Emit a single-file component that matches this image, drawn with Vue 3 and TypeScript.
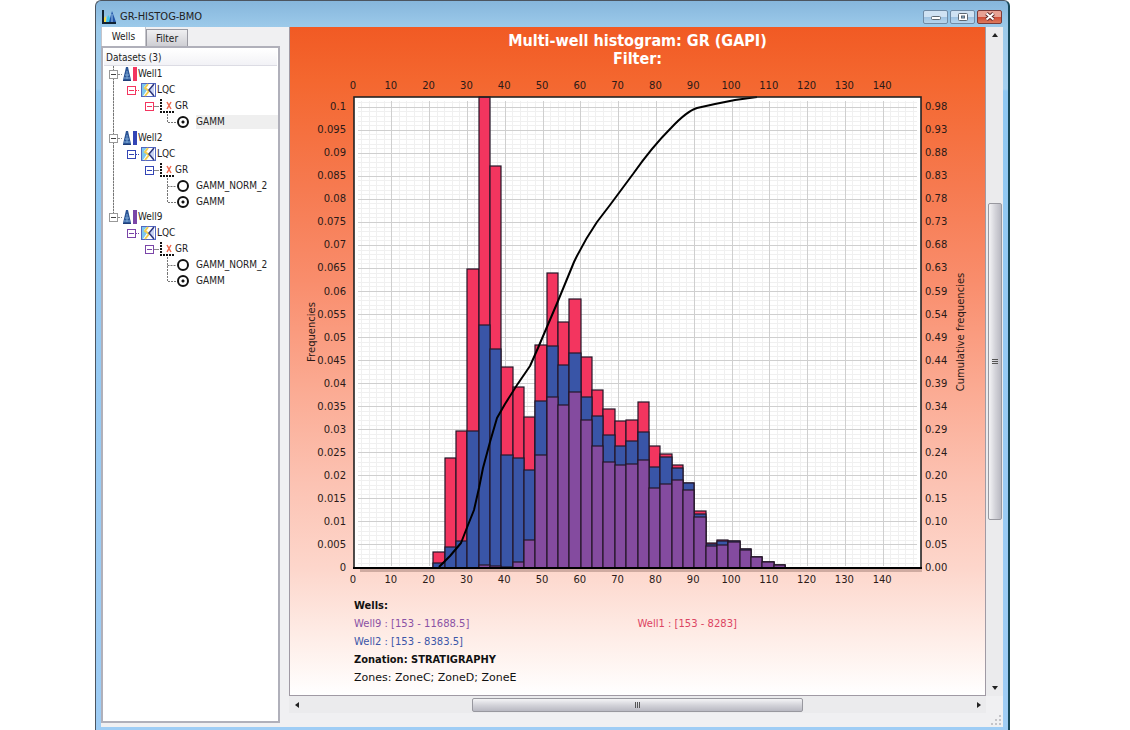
<script setup lang="ts">
import { ref } from 'vue'

type Kind = 'well' | 'set' | 'curve' | 'leaf'
interface TreeRow {
  kind: Kind
  label: string
  color: string
  group: string
  trunk: 'full' | 'half' | 'none'
  more?: boolean
  second?: boolean
  active?: boolean
}

const RED = '#f3355f'
const BLUE = '#3955a7'
const PURPLE = '#844b9f'

const rows: TreeRow[] = []
const wells = [
  { name: 'Well1', color: RED, leaves: ['GAMM'] },
  { name: 'Well2', color: '#3345b5', leaves: ['GAMM_NORM_2', 'GAMM'] },
  { name: 'Well9', color: '#7a45a8', leaves: ['GAMM_NORM_2', 'GAMM'] },
]
wells.forEach((w, i) => {
  const last = i === wells.length - 1
  const base = { color: w.color, group: w.name, trunk: (last ? 'none' : 'full') as TreeRow['trunk'] }
  rows.push({ ...base, kind: 'well', label: w.name, trunk: last ? 'half' : 'full' })
  rows.push({ ...base, kind: 'set', label: 'LQC' })
  rows.push({ ...base, kind: 'curve', label: 'GR' })
  w.leaves.forEach((l, k) =>
    rows.push({
      ...base,
      kind: 'leaf',
      label: l,
      more: k < w.leaves.length - 1,
      second: k > 0,
      active: i === 0,
    }),
  )
})
const selected = ref<Record<string, string>>({ Well1: 'GAMM', Well2: 'GAMM', Well9: 'GAMM' })

const plot = { left: 64, right: 631, top: 29, bottom: 500 }
const unit = (plot.right - plot.left) / 150
const step = 23.04
const xOf = (v: number) => plot.left + v * unit

const xTicks = Array.from({ length: 15 }, (_, i) => i * 10)
const xMinor = Array.from({ length: 74 }, (_, i) => (i + 1) * 2).filter((v) => v % 10 !== 0)
const yMajor = Array.from({ length: 20 }, (_, i) => plot.bottom - (i + 1) * step)
const yMinor = Array.from({ length: 101 }, (_, i) => i + 1)
  .filter((n) => n % 5 !== 0)
  .map((n) => plot.bottom - (n * step) / 5)
const leftLabels = Array.from({ length: 21 }, (_, i) => String(Number((i * 0.005).toFixed(3))))
const rightLabels = [
  '0.00', '0.05', '0.10', '0.15', '0.20', '0.24', '0.29', '0.34', '0.39', '0.44', '0.49',
  '0.54', '0.59', '0.63', '0.68', '0.73', '0.78', '0.83', '0.88', '0.93', '0.98',
]

// stacked heights of each bin: Well1, Well2, Well9
const bins: [number, number, number][] = [
  [16, 5, 0], [110, 21, 0], [137, 27, 0], [299, 137, 0], [471, 243, 3], [402, 219, 2],
  [201, 113, 1], [181, 110, 6], [151, 98, 28], [223, 167, 113], [295, 222, 171],
  [246, 203, 163], [269, 215, 176], [211, 171, 148], [178, 152, 122], [159, 133, 106],
  [147, 122, 103], [148, 127, 104], [166, 136, 108], [122, 101, 80], [114, 111, 84],
  [103, 100, 88], [85, 85, 78], [57, 54, 51], [25, 24, 22], [28, 27, 23], [27, 27, 26],
  [19, 19, 18], [11, 11, 11], [6, 6, 6], [3, 3, 3],
]
const layers = [
  { color: RED, index: 0 },
  { color: BLUE, index: 1 },
  { color: PURPLE, index: 2 },
]
const bars = layers.flatMap((l) =>
  bins
    .map((b, i) => ({
      x: Math.round(xOf(21 + i * 3)),
      w: Math.round(xOf(24 + i * 3)) - Math.round(xOf(21 + i * 3)),
      h: b[l.index],
      color: l.color,
    }))
    .filter((b) => b.h > 0),
)

const curve =
  'M149 499 L160 488 L171 475 L178 457 L184 442 L189 420 L193 400 L200 374 L207 350 L215 336 L227 317 L240 298 L248 280 L268 233 L284 194 Q294 173 307 154 L320 137 L343 106 Q362 79 381 60 Q397 43 407 40 L425 36 L445 32 L467 29'
</script>

<template>
  <main class="window">
    <header class="titlebar">
      <svg class="logo" width="16" height="16" viewBox="0 0 16 16">
        <path d="M2 1V14H15" fill="none" stroke="#123" stroke-width="2" />
        <path d="M3 13V9L5 7V13Z" fill="#f2d64a" />
        <path d="M5 13L7 6L9 9V13Z" fill="#42c3e8" />
        <path d="M8 13L11 2L15 13Z" fill="#2456a8" />
        <path d="M11 5V13" stroke="#9ac8f0" />
      </svg>
      <h1>GR-HISTOG-BMO</h1>
      <div class="controls">
        <button type="button" aria-label="Minimize">
          <svg width="12" height="8" viewBox="0 0 12 8"><rect x="1.5" y="3.5" width="9" height="3" rx="1" fill="#fff" stroke="#5d6873" /></svg>
        </button>
        <button type="button" aria-label="Maximize">
          <svg width="12" height="8" viewBox="0 0 12 8"><rect x="1.5" y=".5" width="9" height="7" rx="1" fill="#fff" stroke="#5d6873" /><rect x="4.5" y="3" width="3" height="2" fill="#8fb4d6" stroke="#5d6873" /></svg>
        </button>
        <button type="button" class="close" aria-label="Close">
          <svg width="12" height="9" viewBox="0 0 12 9"><path d="M2.5 1.5L9.5 7.5M9.5 1.5L2.5 7.5" stroke="#5c2a2a" stroke-width="4" /><path d="M2.5 1.5L9.5 7.5M9.5 1.5L2.5 7.5" stroke="#fff" stroke-width="2" /></svg>
        </button>
      </div>
    </header>

    <div class="body">
      <aside class="side">
        <div class="tabs" role="tablist">
          <button type="button" role="tab" class="tab current" aria-selected="true">Wells</button>
          <button type="button" role="tab" class="tab" aria-selected="false">Filter</button>
        </div>
        <section class="tree">
          <h2>Datasets (3)</h2>
          <div
            v-for="(r, i) in rows"
            :key="i"
            class="row"
            :class="[r.kind, 'trunk-' + r.trunk, { second: r.second }]"
          >
            <button
              v-if="r.kind !== 'leaf'"
              type="button"
              class="expander"
              :aria-label="'Collapse ' + r.label"
              :style="{ borderColor: r.kind === 'well' ? '#999' : r.color, color: r.kind === 'well' ? '#444' : r.color }"
            ></button>

            <svg v-if="r.kind === 'well'" width="20" height="16" viewBox="0 0 20 16">
              <path d="M0 8.5H4" stroke="#888" stroke-dasharray="2 1" />
              <path d="M8 1H10L13 14H5Z" fill="#2c5596" />
              <path d="M9 5V13M7 9H11M6 12H12" stroke="#7fabd8" />
              <path d="M5 14.5H13" stroke="#1e3e78" />
              <rect x="15" y="1" width="4" height="14" :fill="r.color" />
            </svg>
            <svg v-else-if="r.kind === 'set'" width="21" height="16" viewBox="0 0 21 16">
              <path d="M0 8.5H3" :stroke="r.color" stroke-dasharray="1 1" />
              <rect x="5.5" y="1.5" width="14" height="13" fill="#fff" stroke="#5367c0" />
              <path d="M6 2H11L8 5L11 8L7 14H6Z" fill="#7cc8ee" />
              <path d="M12 2L9 6L13 9L9 14" fill="none" stroke="#f2cd50" stroke-width="2" />
              <path d="M18 2L13 8L18 14" fill="#c9d4f4" stroke="#2d357c" stroke-width="1.5" />
            </svg>
            <svg v-else-if="r.kind === 'curve'" width="21" height="16" viewBox="0 0 21 16">
              <path d="M0 8.5H5" stroke="#888" />
              <path d="M7 1V14H21" fill="none" stroke="#111" stroke-width="2" stroke-dasharray="2 1" />
              <path d="M13 4L17 11M17 4L13 11" stroke="#f06a50" stroke-width="1.5" />
            </svg>
            <template v-else>
              <svg class="elbow" width="10" height="16" viewBox="0 0 10 16">
                <path :d="r.more ? 'M.5 0V16M.5 8.5H9' : 'M.5 0V8.5H9'" fill="none" stroke="#777" stroke-dasharray="2 1" />
              </svg>
              <input
                :id="'leaf' + i"
                v-model="selected[r.group]"
                type="radio"
                :name="r.group"
                :value="r.label"
              />
            </template>

            <label v-if="r.kind === 'leaf'" :for="'leaf' + i" :class="{ active: r.active }">{{ r.label }}</label>
            <span v-else>{{ r.label }}</span>
          </div>
        </section>
      </aside>

      <section class="view">
        <div class="chart">
          <h2>Multi-well histogram: GR (GAPI)<br />Filter:</h2>
          <svg class="plot" viewBox="0 0 695 520" role="img" aria-label="Histogram of GR with cumulative curve">
            <path d="M70 502H632" fill="none" stroke="#8a6a62" stroke-opacity=".4" stroke-width="4" />
            <rect :x="plot.left" :y="plot.top" width="567" height="471" fill="#fff" />
            <g stroke="#f0f0f0" shape-rendering="crispEdges">
              <line v-for="v in xMinor" :key="v" :x1="xOf(v)" :x2="xOf(v)" y1="33" y2="498" />
              <line v-for="y in yMinor" :key="y" x1="68" x2="627" :y1="y" :y2="y" />
            </g>
            <g stroke="#cfcfcf" shape-rendering="crispEdges">
              <line v-for="v in xTicks.slice(1)" :key="v" :x1="xOf(v)" :x2="xOf(v)" y1="33" y2="498" />
              <line v-for="y in yMajor" :key="y" x1="68" x2="627" :y1="y" :y2="y" />
            </g>
            <g stroke="#241628" stroke-width="1.2">
              <rect
                v-for="(b, i) in bars"
                :key="i"
                :x="b.x"
                :y="plot.bottom - b.h"
                :width="b.w"
                :height="b.h"
                :fill="b.color"
              />
            </g>
            <path :d="curve" fill="none" stroke="#000" stroke-width="2" stroke-linejoin="round" />
            <rect :x="plot.left" :y="plot.top" width="567" height="471" fill="none" stroke="#222" stroke-width="1.6" />
            <path d="M63 500H632" stroke="#000" stroke-width="2" />
            <g class="tick" text-anchor="middle">
              <text v-for="v in xTicks" :key="v" :x="xOf(v) - 1" y="21">{{ v }}</text>
              <text v-for="v in xTicks" :key="'b' + v" :x="xOf(v) - 1" y="515">{{ v }}</text>
            </g>
            <g class="tick" text-anchor="end">
              <text v-for="(t, i) in leftLabels" :key="t" x="56" :y="plot.bottom - i * step + 3">{{ t }}</text>
            </g>
            <g class="tick">
              <text v-for="(t, i) in rightLabels" :key="t" x="635" :y="plot.bottom - i * step + 3">{{ t }}</text>
            </g>
            <g class="tick" text-anchor="middle">
              <text transform="translate(25 264) rotate(-90)">Frequencies</text>
              <text transform="translate(674 264) rotate(-90)">Cumulative frequencies</text>
            </g>
          </svg>
          <div class="legend">
            <strong class="wide">Wells:</strong>
            <span class="purple">Well9 : [153 - 11688.5]</span>
            <span class="red">Well1 : [153 - 8283]</span>
            <span class="blue wide">Well2 : [153 - 8383.5]</span>
            <strong class="wide">Zonation: STRATIGRAPHY</strong>
            <span class="zones wide">Zones: ZoneC; ZoneD; ZoneE</span>
          </div>
        </div>
        <div class="bar vertical">
          <button type="button" aria-label="Scroll up"><svg width="8" height="8" viewBox="0 0 8 8"><path d="M4 2L7 6H1Z" fill="#222" /></svg></button>
          <div class="thumb"><i></i><i></i><i></i></div>
          <button type="button" aria-label="Scroll down"><svg width="8" height="8" viewBox="0 0 8 8"><path d="M4 6L7 2H1Z" fill="#222" /></svg></button>
        </div>
        <div class="bar horizontal">
          <button type="button" aria-label="Scroll left"><svg width="8" height="8" viewBox="0 0 8 8"><path d="M2 4L6 1V7Z" fill="#222" /></svg></button>
          <div class="thumb"><i></i><i></i><i></i></div>
          <button type="button" aria-label="Scroll right"><svg width="8" height="8" viewBox="0 0 8 8"><path d="M6 4L2 1V7Z" fill="#222" /></svg></button>
        </div>
        <div class="status">
          <svg width="10" height="10" viewBox="0 0 10 10"><path d="M8 0h2v2h-2zM4 4h2v2h-2zM8 4h2v2h-2zM0 8h2v2h-2zM4 8h2v2h-2zM8 8h2v2h-2z" fill="#c4c4c8" /></svg>
        </div>
      </section>
    </div>
  </main>
</template>

<style>
body {
  margin: 0;
  background: #fff;
}
</style>

<style scoped>
* {
  box-sizing: border-box;
}
h1,
h2 {
  margin: 0;
}
button {
  padding: 0;
  margin: 0;
  font: inherit;
  color: inherit;
}
svg {
  display: block;
  flex: none;
}
.window {
  display: flex;
  flex-direction: column;
  min-height: 100vh;
  margin: 0 120px 0 95px;
  padding: 0 5px 3px;
  border: 1px solid #4c5560;
  border-right: 2px solid #17485a;
  border-bottom: 0;
  border-radius: 6px 6px 0 0;
  background: linear-gradient(#86b6dc, #9ccaea 26px, #a4d0f0 88px, #8fc8f2 90px, #9fcdf5);
  font-family: 'DejaVu Sans Condensed', 'DejaVu Sans', sans-serif;
  font-size: 10px;
  color: #222;
}
.titlebar {
  display: flex;
  align-items: center;
  height: 26px;
  padding-top: 5px;
}
.titlebar h1 {
  flex: 1;
  margin-left: 3px;
  font-size: 11px;
  font-weight: 400;
}
.controls {
  display: flex;
  gap: 2px;
  padding-right: 1px;
}
.controls button {
  display: grid;
  place-items: center;
  width: 25px;
  height: 14px;
  border: 1px solid #6f8ba6;
  border-radius: 2px;
  background: linear-gradient(#cfe2f3 50%, #9fc3e2 50%, #b5d5ee);
}
.controls .close {
  border-color: #7a3a38;
  background: linear-gradient(#e8a193 50%, #cf4a35 50%, #dc7a5c);
}
.body {
  display: flex;
  flex: 1;
  background: #f0f0f2;
}
.side {
  display: flex;
  flex-direction: column;
  width: 182px;
  margin-right: 6px;
  padding-bottom: 4px;
}
.tabs {
  display: flex;
  align-items: flex-end;
  height: 19px;
}
.tab {
  width: 42px;
  height: 17px;
  border: 1px solid #9a9aa2;
  border-bottom: 0;
  background: linear-gradient(#efeff1, #cfcfd4);
}
.tab.current {
  width: 45px;
  height: 19px;
  border-color: #c4c4ca;
  border-top: 0;
  background: #fff;
}
.tree {
  flex: 1;
  margin-right: 3px;
  border: 2px solid #b0b0ba;
  background: #fff;
}
.tree h2 {
  height: 17px;
  margin: 1px 1px 0;
  padding-left: 2px;
  border-bottom: 1px solid #dcdce4;
  background: linear-gradient(#fff, #f2f2f6);
  font-size: 10px;
  font-weight: 400;
  line-height: 17px;
}
.row {
  display: flex;
  align-items: center;
  height: 16px;
  line-height: 14px;
  background: repeating-linear-gradient(#777 0 2px, #ccc 2px 3px) 10px 0 / 1px 100% no-repeat;
}
.row.trunk-half {
  background-size: 1px 8px;
}
.row.trunk-none {
  background: none;
}
.row.second {
  height: 15px;
}
.row.well {
  padding-left: 6px;
}
.row.well span {
  margin-left: 6px;
}
.row.set {
  padding-left: 24px;
}
.row.curve {
  padding-left: 42px;
}
.row.leaf {
  padding-left: 64px;
}
.expander {
  display: grid;
  place-items: center;
  flex: none;
  width: 9px;
  height: 9px;
  border: 1px solid;
  background: #fff;
}
.expander::after {
  content: '';
  width: 5px;
  height: 1px;
  background: currentColor;
}
.row.well svg {
  margin-right: -6px;
}
input[type='radio'] {
  appearance: none;
  flex: none;
  width: 12px;
  height: 12px;
  margin: 0;
  border: 2px solid #111;
  border-radius: 50%;
  background: #fff;
}
input[type='radio']:checked {
  background: radial-gradient(circle, #111 0 1px, #fff 2px);
}
.row label {
  flex: 1;
  margin-left: 7px;
}
.row label.active {
  background: #efefef;
}
.view {
  display: grid;
  flex: 1;
  grid-template-columns: minmax(0, 1fr) 17px;
  grid-template-rows: 1fr 17px 14px;
}
.chart {
  border: 1px solid #a09aa4;
  border-top: 0;
  background: linear-gradient(#f15a24, #f4672f 8%, #f67a50 24%, #f98d6c 38%, #fbaa92 54%, #fcc2b2 68%, #fdd6cb 81%, #feece6 91%, #fff);
}
.chart h2 {
  padding-top: 5px;
  color: #fff;
  font-size: 16px;
  font-weight: 700;
  line-height: 18px;
  text-align: center;
}
.plot {
  width: 100%;
}
.tick {
  font-family: 'DejaVu Sans', sans-serif;
  font-size: 10px;
  fill: #2b1a18;
}
.legend {
  display: grid;
  grid-template-columns: 1fr 1fr;
  margin: 9px 64px 8px;
  color: #111;
  font-size: 11px;
  line-height: 18px;
}
.legend span {
  font-family: 'DejaVu Sans', sans-serif;
  font-size: 10px;
}
.legend .zones {
  font-size: 11px;
}
.wide {
  grid-column: 1 / -1;
}
.purple {
  color: #8a52a5;
}
.red {
  color: #dc4462;
}
.blue {
  color: #3b56a8;
}
.bar {
  display: flex;
  align-items: center;
  justify-content: space-between;
  background: #ebebed;
}
.bar button {
  display: grid;
  place-items: center;
  width: 15px;
  height: 15px;
  border: 0;
  background: none;
}
.vertical {
  flex-direction: column;
}
.thumb {
  display: flex;
  align-items: center;
  justify-content: center;
  gap: 1px;
  border: 1px solid #98989f;
  border-radius: 2px;
}
.vertical .thumb {
  flex-direction: column;
  width: 14px;
  height: 47.5%;
  background: linear-gradient(90deg, #f4f4f6, #d4d4da 50%, #b9b9c2);
}
.horizontal .thumb {
  width: 47.5%;
  height: 14px;
  background: linear-gradient(#f4f4f6, #d4d4da 50%, #b9b9c2);
}
.thumb i {
  background: #555;
}
.vertical i {
  width: 6px;
  height: 1px;
}
.horizontal i {
  width: 1px;
  height: 6px;
}
.horizontal {
  grid-column: 1;
}
.status {
  display: flex;
  grid-column: 1 / -1;
  align-items: flex-end;
  justify-content: flex-end;
  padding: 2px;
}
</style>
